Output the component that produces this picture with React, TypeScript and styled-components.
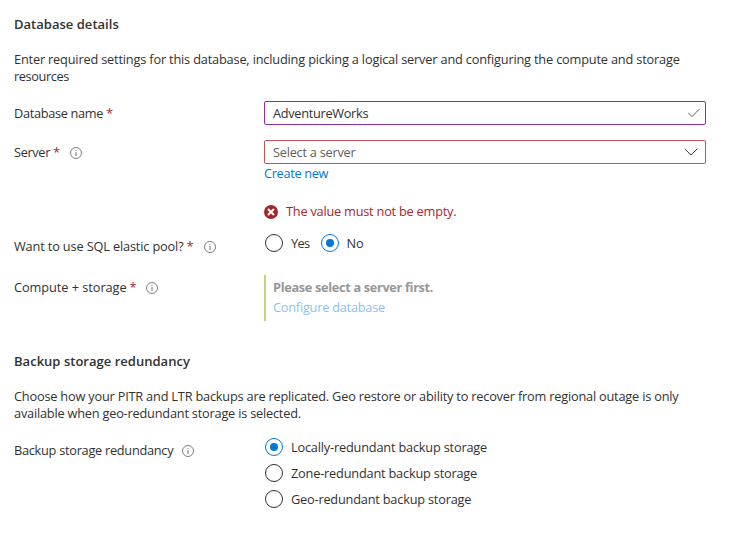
import React from "react";
import styled, { createGlobalStyle } from "styled-components";

const GlobalStyle = createGlobalStyle`
  * { box-sizing: border-box; }
  body {
    margin: 0;
    background: #fff;
    color: #323130;
    font: 12.75px/17px "Open Sans", "Noto Sans", sans-serif;
  }
`;

const Form = styled.main`
  width: 735px;
  height: 534px;
  padding: 15px 0 0 14px;
`;

const Section = styled.section`
  display: flex;
  flex-direction: column;
`;

const Title = styled.h2<{ $top?: number }>`
  margin: ${(p) => p.$top ?? 0}px 0 18px;
  font-size: 13px;
  font-weight: 600;
  line-height: 18px;
  letter-spacing: 0.02px;
`;

const Description = styled.p`
  margin: 0;
`;

const Text = styled.span<{ $track?: number }>`
  letter-spacing: ${(p) => p.$track ?? -0.18}px;
  white-space: nowrap;
`;

const Line = styled(Text)`
  display: block;
`;

const Row = styled.div<{ $top: number; $height: number }>`
  display: grid;
  grid-template-columns: 250px 442px;
  align-items: start;
  margin-top: ${(p) => p.$top}px;
  height: ${(p) => p.$height}px;
`;

const Label = styled.div`
  display: flex;
  align-items: center;
  height: 17px;
  margin-top: 4px;
`;

const Required = styled.span`
  margin-left: 3px;
  width: 6px;
  color: #a4262c;
  font-size: 13px;
  font-weight: 500;
`;

const InfoSvg = styled.svg<{ $gap: number }>`
  margin: 1px 0 0 ${(p) => p.$gap}px;
  flex: none;
`;

const Field = styled.div<{ $color: string; $muted?: boolean }>`
  display: flex;
  align-items: center;
  justify-content: space-between;
  height: 24px;
  padding: 0 5px 0 8px;
  border: 1px solid ${(p) => p.$color};
  border-radius: 2px;
  color: ${(p) => (p.$muted ? "#605e5c" : "#323130")};
`;

const Link = styled.a<{ $disabled?: boolean }>`
  display: block;
  color: ${(p) => (p.$disabled ? "#8bc2ee" : "#0078d4")};
`;

const ServerActions = styled.div`
  padding-top: 1px;
`;

const ErrorMessage = styled.div`
  display: flex;
  align-items: center;
  gap: 8px;
  margin-top: 21px;
  color: #a4262c;
`;

const RadioGroup = styled.div<{ $vertical?: boolean }>`
  display: flex;
  flex-direction: ${(p) => (p.$vertical ? "column" : "row")};
  gap: ${(p) => (p.$vertical ? 8 : 11)}px;
  padding-left: 1px;
`;

const RadioOption = styled.div`
  display: flex;
  align-items: center;
  gap: 8px;
  height: 18px;
`;

const Dot = styled.span<{ $checked?: boolean }>`
  display: flex;
  align-items: center;
  justify-content: center;
  flex: none;
  width: 18px;
  height: 18px;
  border: 1px solid ${(p) => (p.$checked ? "#0078d4" : "#323130")};
  border-radius: 50%;

  &::after {
    content: "";
    width: 8px;
    height: 8px;
    border-radius: 50%;
    background: ${(p) => (p.$checked ? "#0078d4" : "transparent")};
  }
`;

const Summary = styled.div`
  height: 46px;
  padding: 4px 0 0 7px;
  border-left: 2px solid #bad97a;
`;

const SummaryTitle = styled.div`
  margin-bottom: 3px;
  color: #989796;
  font-weight: 700;
`;

const ChevronSvg = styled.svg`
  margin-right: 2px;
`;

const InfoIcon = ({ gap = 10 }: { gap?: number }) => (
  <InfoSvg $gap={gap} width="12" height="12" viewBox="0 0 12 12" fill="none">
    <circle cx="6" cy="6" r="5.5" stroke="#605e5c" strokeWidth="0.8" />
    <path d="M6 5v4M6 3v1" stroke="#605e5c" strokeWidth="0.9" />
  </InfoSvg>
);

const CheckIcon = () => (
  <svg width="12" height="10" viewBox="0 0 12 10" fill="none">
    <path d="M0.5 5L4 8.5L11.5 1" stroke="#484644" strokeWidth="0.9" />
  </svg>
);

const ChevronIcon = () => (
  <ChevronSvg width="14" height="8" viewBox="0 0 14 8" fill="none">
    <path d="M0.7 0.8L7 7L13.3 0.8" stroke="#323130" strokeWidth="0.95" />
  </ChevronSvg>
);

const ErrorIcon = () => (
  <svg width="14" height="14" viewBox="0 0 14 14">
    <circle cx="7" cy="7" r="7" fill="#a4262c" />
    <path d="M4 4L10 10M10 4L4 10" stroke="#fff" strokeWidth="2" />
  </svg>
);

const Radio = ({ text, checked, track }: { text: string; checked?: boolean; track?: number }) => (
  <RadioOption>
    <Dot $checked={checked} />
    <Text $track={track}>{text}</Text>
  </RadioOption>
);

export default function App() {
  return (
    <>
      <GlobalStyle />
      <Form>
        <Section>
          <Title>Database details</Title>
          <Description>
            <Line $track={-0.176}>
              Enter required settings for this database, including picking a logical server and configuring the compute and storage
            </Line>
            <Line $track={-0.38}>resources</Line>
          </Description>
          <Row $top={16} $height={24}>
            <Label>
              <Text $track={-0.32}>Database name</Text>
              <Required>*</Required>
            </Label>
            <Field $color="#8a2da5">
              <Text $track={-0.3}>AdventureWorks</Text>
              <CheckIcon />
            </Field>
          </Row>
          <Row $top={15} $height={79}>
            <Label>
              <Text $track={-0.34}>Server</Text>
              <Required>*</Required>
              <InfoIcon gap={11} />
            </Label>
            <div>
              <Field $color="#bd5459" $muted>
                <Text $track={-0.24}>Select a server</Text>
                <ChevronIcon />
              </Field>
              <ServerActions>
                <Link>
                  <Text $track={-0.32}>Create new</Text>
                </Link>
                <ErrorMessage>
                  <ErrorIcon />
                  <Text $track={-0.22}>The value must not be empty.</Text>
                </ErrorMessage>
              </ServerActions>
            </div>
          </Row>
          <Row $top={15} $height={20}>
            <Label>
              <Text $track={-0.15}>Want to use SQL elastic pool?</Text>
              <Required>*</Required>
              <InfoIcon gap={11} />
            </Label>
            <RadioGroup>
              <Radio text="Yes" track={-0.6} />
              <Radio text="No" checked track={-0.1} />
            </RadioGroup>
          </Row>
          <Row $top={21} $height={46}>
            <Label>
              <Text $track={-0.05}>Compute + storage</Text>
              <Required>*</Required>
              <InfoIcon gap={10.5} />
            </Label>
            <Summary>
              <SummaryTitle>
                <Text $track={-0.33}>Please select a server first.</Text>
              </SummaryTitle>
              <Link $disabled>
                <Text $track={-0.23}>Configure database</Text>
              </Link>
            </Summary>
          </Row>
        </Section>
        <Section>
          <Title $top={31}>Backup storage redundancy</Title>
          <Description>
            <Line $track={-0.197}>
              Choose how your PITR and LTR backups are replicated. Geo restore or ability to recover from regional outage is only
            </Line>
            <Line $track={-0.205}>available when geo-redundant storage is selected.</Line>
          </Description>
          <Row $top={16} $height={70}>
            <Label>
              <Text $track={-0.27}>Backup storage redundancy</Text>
              <InfoIcon gap={8.5} />
            </Label>
            <RadioGroup $vertical>
              <Radio text="Locally-redundant backup storage" checked track={-0.19} />
              <Radio text="Zone-redundant backup storage" track={-0.195} />
              <Radio text="Geo-redundant backup storage" track={-0.2} />
            </RadioGroup>
          </Row>
        </Section>
      </Form>
    </>
  );
}
